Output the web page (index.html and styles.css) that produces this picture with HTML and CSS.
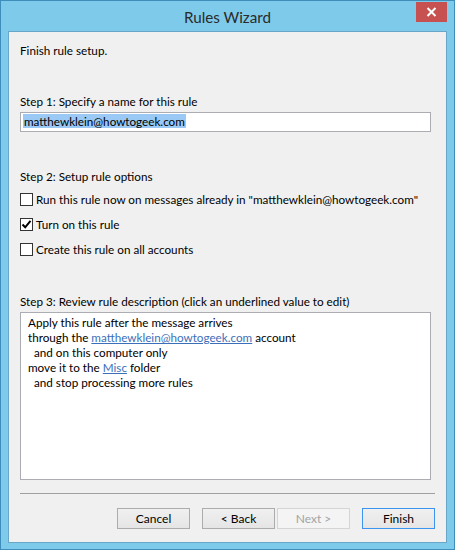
FILE: index.html
```html
<!DOCTYPE html>
<html>
<head>
<meta charset="utf-8">
<link rel="stylesheet" href="styles.css">
</head>
<body>
<div class="window">
  <div class="titlebar">
    <span class="title">Rules Wizard</span>
    <button class="close" aria-label="Close">
      <svg width="11" height="10" viewBox="0 0 11 10"><path d="M1.5 1 L9.5 9 M9.5 1 L1.5 9" stroke="#fff" stroke-width="2" fill="none"/></svg>
    </button>
  </div>
  <div class="client">
    <div class="intro">Finish rule setup.</div>

    <div class="label step1">Step 1: Specify a name for this rule</div>
    <div class="input"><span class="sel">matthewklein@howtogeek.com</span></div>

    <div class="label step2">Step 2: Setup rule options</div>
    <div class="options">
      <div class="opt"><span class="cb"></span><span>Run this rule now on messages already in "matthewklein@howtogeek.com"</span></div>
      <div class="opt"><span class="cb checked"><svg width="11" height="11" viewBox="0 0 11 11"><path d="M1.5 5.5 L4.2 8.3 L9.5 1.8" stroke="#000" stroke-width="2" fill="none"/></svg></span><span>Turn on this rule</span></div>
      <div class="opt"><span class="cb"></span><span>Create this rule on all accounts</span></div>
    </div>

    <div class="label step3">Step 3: Review rule description (click an underlined value to edit)</div>
    <div class="desc">
      <div>Apply this rule after the message arrives</div>
      <div>through the <a class="link">matthewklein@howtogeek.com</a> account</div>
      <div class="ind">and on this computer only</div>
      <div>move it to the <a class="link">Misc</a> folder</div>
      <div class="ind">and stop processing more rules</div>
    </div>

    <div class="sep"></div>

    <div class="buttons">
      <button class="btn">Cancel</button>
      <div class="pair">
        <button class="btn">&lt; Back</button>
        <button class="btn disabled">Next &gt;</button>
      </div>
      <button class="btn default">Finish</button>
    </div>
  </div>
</div>
</body>
</html>
```
FILE: styles.css
```css
* { box-sizing: border-box; }
html, body { margin: 0; padding: 0; }
body {
  width: 455px;
  height: 550px;
  overflow: hidden;
  font-family: Lato, "Noto Sans", sans-serif;
  font-size: 11.7px;
  color: #000;
}
.window {
  width: 455px;
  height: 550px;
  background: #7ecaea;
  border: 1px solid #3f8dba;
  display: flex;
  flex-direction: column;
}
.titlebar {
  height: 30px;
  position: relative;
  display: flex;
  justify-content: center;
  align-items: center;
}
.title {
  font-size: 15.2px;
  color: #2b2b2b;
  margin-top: 1px;
}
.close {
  position: absolute;
  top: 1px;
  right: 7px;
  width: 31px;
  height: 20px;
  border: none;
  background: #c75050;
  padding: 0;
  display: flex;
  align-items: center;
  justify-content: center;
}
.client {
  margin: 0 7px;
  height: 512px;
  background: #f0f0f0;
  border: 1px solid #6aa6c8;
  padding: 11px 0 0 11px;
  display: flex;
  flex-direction: column;
  line-height: 15px;
}
.label, .intro { height: 15px; white-space: nowrap; }
.step1 { margin-top: 36px; }
.input {
  margin-top: 3px;
  width: 411px;
  height: 20px;
  background: #fff;
  border: 1px solid #abadb3;
  padding: 1px 0 0 2px;
  line-height: 15px;
}
.sel { background: #99c9f4; padding: 0 1px; display: inline-block; height: 14px; line-height: 14px; }
.step2 { margin-top: 37px; }
.options {
  margin-top: 9px;
  display: flex;
  flex-direction: column;
  gap: 12px;
}
.opt {
  display: flex;
  align-items: center;
  gap: 3px;
  height: 13px;
  white-space: nowrap;
}
.cb {
  width: 13px;
  height: 13px;
  border: 1px solid #333;
  background: #fff;
  flex: none;
  display: flex;
  align-items: center;
  justify-content: center;
}
.step3 { margin-top: 38px; }
.desc {
  margin-top: 3px;
  width: 411px;
  height: 168px;
  background: #fff;
  border: 1px solid #abadb3;
  padding: 2px 0 0 7px;
  line-height: 15px;
}
.desc .ind { padding-left: 6px; }
.link { color: #3b6fba; text-decoration: underline; }
.sep {
  margin-top: 13px;
  width: 415px;
  height: 1px;
  background: #a0a0a0;
}
.buttons {
  margin-top: 14px;
  margin-left: 97px;
  display: flex;
  gap: 12px;
}
.pair { display: flex; gap: 2px; }
.btn {
  width: 73px;
  height: 21px;
  font-family: inherit;
  font-size: 12px;
  color: #000;
  border: 1px solid #acacac;
  background: linear-gradient(#f0f0f0, #e5e5e5);
  padding: 0;
  line-height: 17px;
}
.btn.disabled { color: #a3a3a3; border-color: #d5d5d5; background: #f4f4f4; }
.btn.default { border-color: #3c94f0; }
```
